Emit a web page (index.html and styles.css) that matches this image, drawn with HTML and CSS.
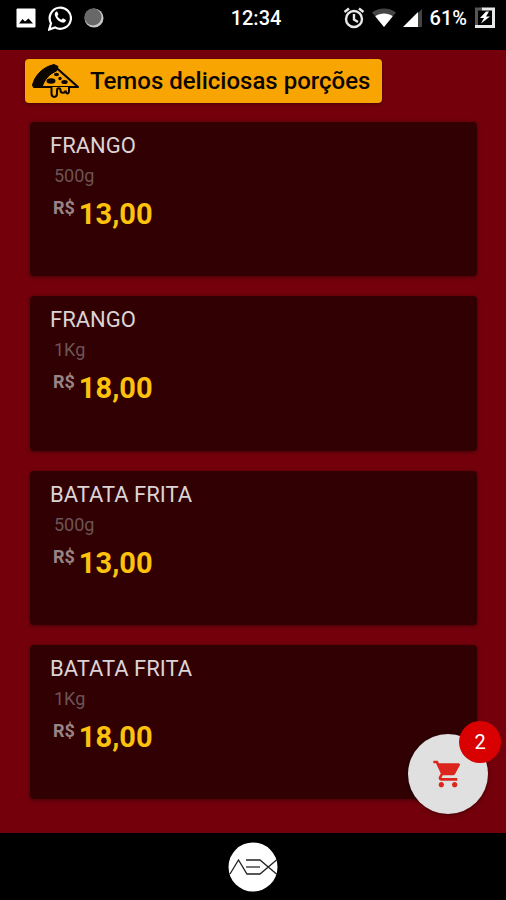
FILE: index.html
```html
<!DOCTYPE html>
<html lang="pt-BR">
<head>
    <meta charset="UTF-8">
    <meta name="viewport" content="width=device-width, initial-scale=1">
    <title>Porções</title>
    <link rel="stylesheet" href="styles.css">
</head>
<body>
    <header class="status-bar">
        <div class="status-left">
            <svg width="20" height="20" viewBox="0 0 20 20">
                <rect x="0.5" y="0.5" width="19" height="19" rx="1" fill="#fff"/>
                <path d="M3 15.500L6.500 11l2.500 2.500 3.500-3 4.500 5z" fill="#000"/>
            </svg>
            <svg width="24" height="26" viewBox="0 0 24 26">
                <path d="M1.200 24.500L3 18.300A10.600 10.600 0 1 1 7 22.400z" fill="none" stroke="#fff" stroke-width="2.200"/>
                <path d="M8.300 6.600c-1.600 1-1.900 2.700-1.200 4.300 1.300 3.200 3.700 5.600 6.900 6.600 2 .5 3.800-.5 4-2.500l-3-1.700-1.600 1.500c-1.900-.8-3.200-2.100-4.100-3.800l1.100-1.500-1.200-2.900z" fill="#fff"/>
            </svg>
            <svg width="20" height="20" viewBox="0 0 20 20">
                <circle cx="10" cy="10" r="9.500" fill="#c8c8c8"/>
                <circle cx="9" cy="9" r="8.500" fill="#686868"/>
            </svg>
        </div>
        <span class="clock">12:34</span>
        <div class="status-right">
            <svg width="22" height="22" viewBox="0 0 22 22" fill="none" stroke="#e8e8e8" stroke-width="2.400">
                <circle cx="11" cy="12" r="8"/>
                <path d="M11 7v5.500l4 2.500M1.500 5L6 1.500M20.500 5L16 1.500"/>
            </svg>
            <svg width="24" height="20" viewBox="0 0 24 20">
                <path d="M12 19L0 4.500C7-.8 17-.8 24 4.500z" fill="#444"/>
                <path d="M12 19L3.300 8.300c5-3.800 12.400-3.800 17.400 0z" fill="#fff"/>
            </svg>
            <svg width="20" height="20" viewBox="0 0 20 20">
                <path d="M19 1v18h-5V6z" fill="#444"/>
                <path d="M0 19L15 4v15z" fill="#fff"/>
            </svg>
            <span class="battery">61%</span>
            <svg width="22" height="22" viewBox="0 0 22 22">
                <path d="M2.500 20V2H9" fill="none" stroke="#555" stroke-width="3"/>
                <path d="M8 2h11.500v17.500H1" fill="none" stroke="#e8e8e8" stroke-width="3"/>
                <path d="M12 4.500L6 11h4l-3 5.500L16 9.500h-4l3-5z" fill="#fff"/>
            </svg>
        </div>
    </header>

    <main class="menu">
        <h1 class="menu-title">
            <svg width="48" height="34" viewBox="0 0 48 34">
                <path d="M24 3.500L46 23H5" fill="none" stroke="#0c0600" stroke-width="2.200" stroke-linejoin="round"/>
                <path d="M22 0.500L26 2.500 24.500 7C17.500 10 12.500 15 10 23.500H1.500L0.500 21C3 11 11 3 22 0.500z" fill="#0c0600" stroke="#0c0600" stroke-linejoin="round"/>
                <ellipse cx="19" cy="17" rx="4.500" ry="2.700" fill="#0c0600"/>
                <ellipse cx="32.500" cy="18" rx="3.200" ry="2" fill="#0c0600"/>
                <ellipse cx="24.500" cy="10.500" rx="2.500" ry="1.700" fill="#0c0600"/>
                <circle cx="28" cy="14.500" r="1.700" fill="#0c0600"/>
                <path d="M19.500 23v6.500c0 4.500 5.500 4.500 5.500 0v-3c0-3 3.500-3 3.500 0s5 3 5 0c1 4.500 3.500 3.500 3.500 0V23" fill="#f9a501" stroke="#0c0600" stroke-width="2"/>
            </svg>
            Temos deliciosas porções
        </h1>

        <div class="products">
            <article class="card">
                <h2 class="name">FRANGO</h2>
                <p class="size">500g</p>
                <p class="price"><span class="currency">R$</span> <strong>13,00</strong></p>
            </article>
            <article class="card">
                <h2 class="name">FRANGO</h2>
                <p class="size">1Kg</p>
                <p class="price"><span class="currency">R$</span> <strong>18,00</strong></p>
            </article>
            <article class="card">
                <h2 class="name">BATATA FRITA</h2>
                <p class="size">500g</p>
                <p class="price"><span class="currency">R$</span> <strong>13,00</strong></p>
            </article>
            <article class="card">
                <h2 class="name">BATATA FRITA</h2>
                <p class="size">1Kg</p>
                <p class="price"><span class="currency">R$</span> <strong>18,00</strong></p>
            </article>
        </div>

        <button type="button" class="cart-button" aria-label="Carrinho">
            <svg width="32" height="32" viewBox="0 0 24 24" fill="#dc251c">
                <path d="M7 18c-1.100 0-1.990.9-1.990 2S5.900 22 7 22s2-.9 2-2-.9-2-2-2zM1 2v2h2l3.600 7.590-1.350 2.450c-.16.280-.25.610-.25.960 0 1.100.9 2 2 2h12v-2H7.420c-.14 0-.25-.11-.25-.25l.03-.12.900-1.630h7.450c.75 0 1.410-.41 1.750-1.030l3.580-6.490A1 1 0 0 0 20 4H5.210l-.94-2H1zm16 16c-1.100 0-1.990.9-1.990 2s.89 2 1.990 2 2-.9 2-2-.9-2-2-2z"/>
            </svg>
            <span class="badge">2</span>
        </button>
    </main>

    <footer class="bottom-bar">
        <a href="#" class="logo" aria-label="AEX">
            <svg width="50" height="50" viewBox="0 0 50 50" fill="none" stroke="#222" stroke-width="1.300">
                <circle cx="25" cy="25" r="24.500" fill="#fff" stroke="none"/>
                <path d="M2 32L10.500 18 19 32h13L48.500 18M18 18h14l16.500 14"/>
                <path d="M18 25h14" stroke="#777" stroke-width="2"/>
            </svg>
        </a>
    </footer>
</body>
</html>
```

FILE: styles.css
```css
* {
    box-sizing: border-box;
}

body {
    margin: 0;
    min-height: 100vh;
    display: flex;
    flex-direction: column;
    font-family: Roboto, "Liberation Sans", sans-serif;
    background-color: #73000b;
}

h1, h2, p {
    margin: 0;
}

svg {
    display: block;
}

/* Status bar */
.status-bar {
    display: grid;
    grid-template-columns: 1fr auto 1fr;
    align-items: center;
    height: 50px;
    padding: 0 10px 14px 16px;
    background-color: #000;
    color: #fff;
    font-size: 20px;
    font-weight: 500;
}

.status-left,
.status-right {
    display: flex;
    align-items: center;
}

.status-left {
    gap: 12px;
}

.status-right {
    justify-content: flex-end;
    gap: 7px;
}

/* Product list */
.menu {
    position: relative;
    flex: 1;
    display: flex;
    flex-direction: column;
    align-items: flex-start;
    gap: 19px;
    padding: 9px 29px 34px 25px;
}

.menu-title {
    display: flex;
    align-items: center;
    gap: 10px;
    height: 44px;
    padding: 0 12px 0 7px;
    border-radius: 4px;
    background-color: #f9a501;
    color: #0c0600;
    font-size: 24px;
    font-weight: 500;
    white-space: nowrap;
    box-shadow: 0 1px 3px rgba(0, 0, 0, 0.4);
}

.products {
    flex: 1;
    align-self: stretch;
    display: grid;
    grid-auto-rows: 1fr;
    gap: 20px;
    padding-left: 5px;
}

.card {
    padding: 8px 20px;
    border-radius: 4px;
    background-color: #300003;
    box-shadow: 0 1px 4px rgba(0, 0, 0, 0.4);
}

.name {
    color: #dcd4d4;
    font-size: 22px;
    font-weight: 400;
    line-height: 32px;
}

.size {
    padding-left: 4px;
    color: #6c5455;
    font-size: 18px;
    line-height: 28px;
}

.price {
    display: flex;
    align-items: flex-start;
    gap: 4px;
    padding-left: 3px;
    color: #fcc20c;
    font-size: 29px;
    line-height: 48px;
}

.currency {
    color: #978586;
    font-size: 18px;
    font-weight: 700;
    line-height: 36px;
}

/* Cart */
.cart-button {
    position: absolute;
    right: 18px;
    bottom: 19px;
    display: flex;
    align-items: center;
    justify-content: center;
    width: 80px;
    height: 80px;
    padding: 0;
    border: none;
    border-radius: 50%;
    background-color: #e0e0e0;
    font-family: inherit;
    cursor: pointer;
    box-shadow: 0 1px 4px rgba(0, 0, 0, 0.4);
}

.badge {
    position: absolute;
    top: -13px;
    right: -13px;
    width: 42px;
    height: 42px;
    border-radius: 50%;
    background-color: #d80000;
    color: #fff;
    font-size: 20px;
    line-height: 42px;
    text-align: center;
}

/* Footer */
.bottom-bar {
    display: flex;
    justify-content: center;
    align-items: center;
    height: 67px;
    background-color: #000;
}
```
